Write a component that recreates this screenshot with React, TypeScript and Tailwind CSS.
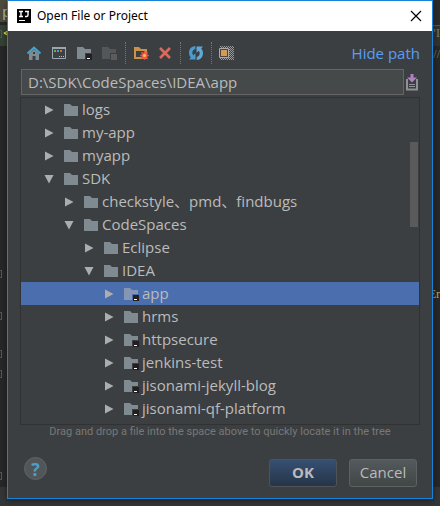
import { useState } from "react";

type Node = { name: string; depth: number; open?: boolean; module?: boolean };

const NODES: Node[] = [
  { name: "logs", depth: 0 },
  { name: "my-app", depth: 0 },
  { name: "myapp", depth: 0 },
  { name: "SDK", depth: 0, open: true },
  { name: "checkstyle、pmd、findbugs", depth: 1 },
  { name: "CodeSpaces", depth: 1, open: true },
  { name: "Eclipse", depth: 2 },
  { name: "IDEA", depth: 2, open: true },
  { name: "app", depth: 3, module: true },
  { name: "hrms", depth: 3 },
  { name: "httpsecure", depth: 3, module: true },
  { name: "jenkins-test", depth: 3, module: true },
  { name: "jisonami-jekyll-blog", depth: 3, module: true },
  { name: "jisonami-qf-platform", depth: 3, module: true },
];

const INDENT = ["pl-[22px]", "pl-[42px]", "pl-[62px]", "pl-[82px]"];

const ICON = "size-4 shrink-0";

function FolderIcon({ module, selected }: { module?: boolean; selected?: boolean }) {
  return (
    <svg className={ICON} viewBox="0 0 16 16" aria-hidden="true">
      <path d="M1 2h6l2 2h6v10H1z" fill={selected ? "#8496b4" : "#7f8b91"} />
      {module && (
        <>
          <path d="M9 8h7v7H9z" fill={selected ? "#4b6eaf" : "#3c3f41"} />
          <path d="M10 9h6v6h-6z" fill="#231f20" />
          <path d="M11 13h3v1h-3z" fill="#fff" />
        </>
      )}
    </svg>
  );
}

function Arrow({ open }: { open?: boolean }) {
  return (
    <svg className="size-[10px]" viewBox="0 0 10 10" aria-hidden="true">
      <path d={open ? "M0.500 1h9L5 9.500z" : "M1 0.500v9L9.500 5z"} fill="#adadad" />
    </svg>
  );
}

function HomeIcon() {
  return (
    <svg className={ICON} viewBox="0 0 16 16" aria-hidden="true">
      <path d="M3 8.500L8 4l5 4.500V15H9.500v-4h-3v4H3z" fill="#7f8b91" />
      <path d="M7 7h2v2H7z" fill="#3c3f41" />
      <path d="M1.500 8.500L8 2.500l6.500 6" fill="none" stroke="#3fa6cf" strokeWidth="1.900" />
    </svg>
  );
}

function DesktopIcon() {
  return (
    <svg className={ICON} viewBox="0 0 16 16" aria-hidden="true">
      <path d="M1.500 2.500h13v11h-13z" fill="#3c4042" stroke="#9aa7b0" />
      <path d="M1 2h14v2H1z" fill="#9aa7b0" />
      <path d="M3 5h2v2H3z" fill="#62b543" />
      <path d="M6 5h2v2H6z" fill="#40a0dc" />
      <path d="M9 5h2v2H9z" fill="#f26522" />
      <path d="M8 11h1v1H8zM10 11h1v1h-1zM12 11h1v1h-1z" fill="#b5bec4" />
    </svg>
  );
}

function ModuleIcon() {
  return (
    <svg className={ICON} viewBox="0 0 16 16" aria-hidden="true">
      <path d="M1 2h6l2 2h6v10H1z" fill="#7f8b91" />
      <path d="M9 8h7v8H9z" fill="#3c3f41" />
      <path d="M10 9h6v6h-6z" fill="#231f20" />
      <path d="M11 13h3v1h-3z" fill="#fff" />
    </svg>
  );
}

function ModuleDisabledIcon() {
  return (
    <svg className={ICON} viewBox="0 0 16 16" aria-hidden="true">
      <path d="M1 2h6l2 2h6v10H1z" fill="#555657" />
      <path d="M9 8h7v8H9z" fill="#3c3f41" />
      <path d="M10 9h6v6h-6z" fill="#5c5c5c" />
    </svg>
  );
}

function NewFolderIcon() {
  return (
    <svg className={ICON} viewBox="0 0 16 16" aria-hidden="true">
      <path d="M1 2h5l2 2h6v10H1z" fill="#c9924a" />
      <path d="M3 6h9v6H3z" fill="#3c3f41" />
      <path
        d="M11.500 6l.9 2.200 2.200-.9-.8 2.200 2.200 1-2.200 1 .8 2.200-2.200-.9-.9 2.200-.9-2.200-2.200.9.800-2.200-2.200-1 2.200-1-.8-2.200 2.200.9z"
        fill="#f0523f"
        stroke="#f0523f"
        strokeWidth="0.600"
      />
      <circle cx="11.500" cy="10.500" r="1.700" fill="#f9b060" />
    </svg>
  );
}

function DeleteIcon() {
  return (
    <svg className={ICON} viewBox="0 0 16 16" aria-hidden="true">
      <path d="M3 3l10 10M13 3L3 13" stroke="#db6a5d" strokeWidth="2.600" />
    </svg>
  );
}

function RefreshIcon() {
  return (
    <svg className={ICON} viewBox="0 0 16 16" aria-hidden="true">
      <path d="M7.300 1C3.500 1.200 1 4.200 1 7.800c0 1.900.7 3.500 1.800 4.700L1 14.500h6.500V8.300L5.300 10.200C4.700 9.500 4.300 8.700 4.300 7.700 4.300 5.800 5.500 4.500 7.300 4z" fill="#4b9bcb" />
      <path d="M8.700 15c3.800-.2 6.300-3.200 6.300-6.800 0-1.900-.7-3.500-1.800-4.700L15 1.500H8.500v6.200l2.200-1.900c.6.700 1 1.500 1 2.500 0 1.900-1.200 3.200-3 3.700z" fill="#5fa9d3" />
    </svg>
  );
}

function HiddenFilesIcon() {
  return (
    <svg className={ICON} viewBox="0 0 16 16" aria-hidden="true">
      <defs>
        <pattern id="checker" width="2" height="2" patternUnits="userSpaceOnUse">
          <path d="M0 0h1v1H0zM1 1h1v1H1z" fill="#9a9a9a" />
        </pattern>
      </defs>
      <path d="M1 1h14v14H1z" fill="url(#checker)" />
      <path d="M0 3h10v10H0z" fill="#3c3f41" />
      <path d="M.5 3.500h9v9h-9z" fill="#4d4540" stroke="#a9aaab" />
      <path d="M2 5h6v6H2z" fill="#d69a56" />
    </svg>
  );
}

function HistoryIcon() {
  return (
    <svg className="h-[18px] w-3 shrink-0" viewBox="0 0 12 18" aria-hidden="true">
      <path d="M1 6v10.500h10V6" fill="none" stroke="#8f9194" strokeWidth="2" />
      <path d="M3 11.500h6M3 13.500h6" stroke="#8f9194" />
      <path d="M4.500 1h3v3.500H11L6 9.500 1 4.500h3.500z" fill="#b07fc0" />
    </svg>
  );
}

function IdeaLogo() {
  return (
    <svg className="size-[14px] shrink-0" viewBox="0 0 14 14" aria-hidden="true">
      <path d="M0 0h14v14H0z" fill="#000" />
      <path d="M2 2.500h4M4 2.500v5M2 7.500h4M8 2.500h4M11 2.500V6q0 1.500-1.500 1.500H8" fill="none" stroke="#fff" strokeWidth="1.400" />
      <path d="M2 11h6v1H2z" fill="#fff" />
    </svg>
  );
}

function ToolButton({ label, disabled, children }: { label: string; disabled?: boolean; children: React.ReactNode }) {
  return (
    <button type="button" aria-label={label} disabled={disabled} className="flex size-4 items-center justify-center">
      {children}
    </button>
  );
}

function Separator() {
  return <span className="h-[22px] border-l border-dotted border-[#737577]" />;
}

function FoldMark({ className }: { className: string }) {
  return <span className={`absolute -left-1 h-2 w-1.5 border border-[#555] ${className}`} />;
}

function EditorBackdrop() {
  return (
    <div aria-hidden="true" className="absolute inset-0 overflow-hidden bg-[#272727] font-['Liberation_Mono',monospace] text-[15px] leading-5">
      <div className="h-[22px] w-full bg-[#4d4b3c] pl-0.5 pt-1 text-[#a9b7a0]">p</div>
      <div className="absolute left-0 top-[25px] h-[21px] w-2 bg-[#344134]" />
      <div className="absolute left-[3px] top-[25px] text-[#e8e03c]">&lt;</div>
      <FoldMark className="top-[30px]" />
      <FoldMark className="top-[270px]" />
      <FoldMark className="top-[312px]" />
      <FoldMark className="top-[350px]" />
      <FoldMark className="top-[370px]" />
      <FoldMark className="top-[472px]" />
      <div className="absolute right-0 top-0 h-[25px] w-2 bg-[#2b2b2b]" />
      <div className="absolute right-0 top-[25px] h-[21px] w-2 border-t border-[#555] bg-[#323232]" />
      <div className="absolute right-0 top-[25px] font-['Liberation_Serif',serif] text-xs text-[#6a8759]">"I</div>
      <div className="absolute right-0 top-[46px] font-['Liberation_Serif',serif] text-xs text-[#6a8759]">//</div>
      <div className="absolute right-0 top-[286px] font-['Liberation_Serif',serif] text-xs text-[#d0a045]">Er</div>
      <div className="absolute inset-x-0 bottom-0 h-5 bg-[#333536]" />
    </div>
  );
}

export default function App() {
  const [selected, setSelected] = useState("app");
  const [path, setPath] = useState("D:\\SDK\\CodeSpaces\\IDEA\\app");

  return (
    <div className="relative pb-2 font-['Open_Sans','Noto_Sans_CJK_SC',sans-serif] text-[#bbbbbb]">
      <EditorBackdrop />
      <section
        role="dialog"
        aria-labelledby="dialog-title"
        className="relative mx-[7px] border border-[#1883d7] bg-[#3c3f41] shadow-[0_2px_6px_rgba(0,0,0,0.4)]"
      >
        <header className="flex h-[30px] items-center bg-white pl-[9px] pr-2.5">
          <IdeaLogo />
          <h1 id="dialog-title" className="ml-1.5 font-['Noto_Sans',sans-serif] text-xs text-black">Open File or Project</h1>
          <button type="button" aria-label="Close" className="ml-auto flex size-3 items-center justify-center">
            <svg className="size-3" viewBox="0 0 12 12" aria-hidden="true">
              <path d="M1 1l10 10M11 1L1 11" stroke="#000" strokeWidth="1.200" />
            </svg>
          </button>
        </header>

        <div className="flex h-[38px] items-center pl-[18px] pr-3 pt-1.5">
          <div className="flex items-center gap-[9px]">
            <ToolButton label="Home directory"><HomeIcon /></ToolButton>
            <ToolButton label="Desktop directory"><DesktopIcon /></ToolButton>
            <ToolButton label="Project directory"><ModuleIcon /></ToolButton>
            <ToolButton label="Module directory" disabled><ModuleDisabledIcon /></ToolButton>
          </div>
          <div className="ml-2 flex items-center gap-[7px]">
            <Separator />
            <div className="flex gap-2">
              <ToolButton label="New folder"><NewFolderIcon /></ToolButton>
              <ToolButton label="Delete"><DeleteIcon /></ToolButton>
            </div>
            <Separator />
            <ToolButton label="Refresh"><RefreshIcon /></ToolButton>
            <Separator />
            <ToolButton label="Show hidden files"><HiddenFilesIcon /></ToolButton>
          </div>
          <a href="#path" className="ml-auto text-[15px] text-[#589df6]">Hide path</a>
        </div>

        <div className="flex items-center gap-0.5 pl-[13px] pr-[14px]">
          <input
            id="path"
            aria-label="Path"
            value={path}
            onChange={(event) => setPath(event.target.value)}
            className="h-[26px] min-w-0 flex-1 border border-[#646464] bg-[#45494a] px-1.5 text-[15px] text-[#bbbbbb] outline-none"
          />
          <button type="button" aria-label="Recent paths" className="flex">
            <HistoryIcon />
          </button>
        </div>

        <div className="relative ml-3 mr-3 mt-0.5 border border-[#323232] pb-1">
          <ul role="tree" aria-label="Files">
            {NODES.map((node) => {
              const active = node.name === selected;
              return (
                <li
                  key={node.name}
                  role="treeitem"
                  aria-level={node.depth + 1}
                  aria-expanded={!!node.open}
                  aria-selected={active}
                  onClick={() => setSelected(node.name)}
                  className={`flex h-[23px] items-center text-[15px] ${INDENT[node.depth]} ${active ? "bg-[#4b6eaf]" : ""}`}
                >
                  <span className="mr-[9px] flex w-[11px] justify-center">
                    <Arrow open={node.open} />
                  </span>
                  <FolderIcon module={node.module} selected={active} />
                  <span className="ml-[3px] whitespace-nowrap">{node.name}</span>
                </li>
              );
            })}
          </ul>
          <div className="absolute right-px top-11 h-[85px] w-2 bg-[#5a5a5b]" />
        </div>

        <p className="text-center font-[Roboto,sans-serif] text-[11px] leading-[14px] text-[#787878]">
          Drag and drop a file into the space above to quickly locate it in the tree
        </p>

        <footer className="flex items-center gap-3 pb-2.5 pl-4 pr-[15px] pt-[18px]">
          <button
            type="button"
            aria-label="Help"
            className="mb-2 mr-auto flex size-[23px] items-center justify-center rounded-full border border-[#606465] bg-[#515658] text-lg font-bold text-[#4a9fcb]"
          >
            ?
          </button>
          <button
            type="button"
            className="h-7 w-[68px] rounded-[3px] border border-[#4f5356] bg-linear-to-b from-[#365072] to-[#263449] text-[15px] font-bold"
          >
            OK
          </button>
          <button
            type="button"
            className="h-7 w-[68px] rounded-[3px] border border-[#5e6263] bg-linear-to-b from-[#54595b] to-[#414647] text-[15px]"
          >
            Cancel
          </button>
        </footer>
      </section>
    </div>
  );
}
